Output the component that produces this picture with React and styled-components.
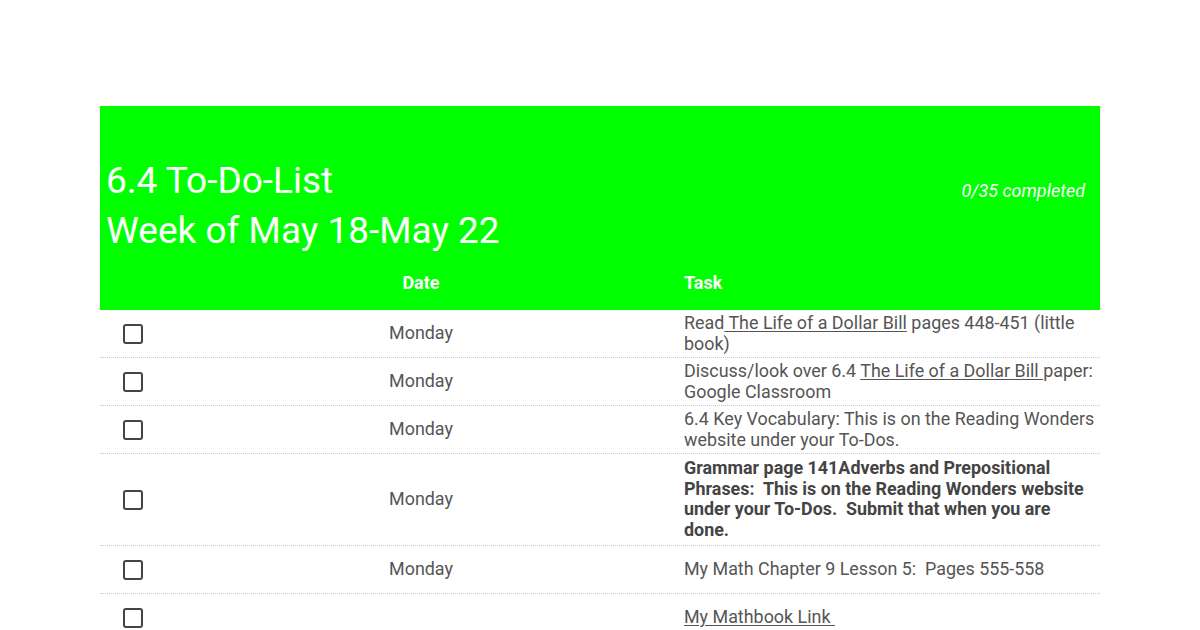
import styled, { createGlobalStyle } from "styled-components";

const GlobalStyle = createGlobalStyle`
  html, body {
    margin: 0;
    padding: 0;
    background: #fff;
  }
  body {
    font-family: Roboto, "Liberation Sans", Arial, sans-serif;
  }
`;

const Page = styled.div`
  width: 1000px;
  margin: 0 auto;
  padding-top: 106px;
`;

const Header = styled.div`
  background: #00ff00;
  color: #fff;
  padding-top: 50px;
`;

const TitleRow = styled.div`
  display: flex;
  justify-content: space-between;
  align-items: flex-start;
  padding: 0 15px 0 6px;
`;

const Title = styled.h1`
  margin: 0;
  font-size: 37px;
  font-weight: 400;
  line-height: 50px;
`;

const Progress = styled.div`
  font-size: 18px;
  font-style: italic;
  margin-top: 24px;
`;

const Grid = styled.div`
  display: grid;
  grid-template-columns: 64px 514px 1fr;
`;

const HeadCell = styled.div`
  font-weight: 700;
  font-size: 18px;
  padding: 16px 6px 17px;
  text-align: ${(p) => (p.$center ? "center" : "left")};
`;

const Row = styled(Grid)`
  min-height: 47px;
  border-bottom: 1px dotted #c8c8c8;
  color: #555;
  font-size: 17.9px;
  line-height: 20.5px;
`;

const BoxCell = styled.div`
  display: flex;
  align-items: center;
  justify-content: center;
  padding-left: 2px;
`;

const Box = styled.span`
  width: 16px;
  height: 16px;
  border: 2.5px solid #444;
  border-radius: 3px;
`;

const DateCell = styled.div`
  display: flex;
  align-items: center;
  justify-content: center;
`;

const TaskCell = styled.div`
  display: flex;
  align-items: center;
  white-space: pre-wrap;
  padding: ${(p) => (p.$bold ? "4px 6px 5px" : "3px 0 3px 6px")};
  font-weight: ${(p) => (p.$bold ? 700 : 400)};
  color: ${(p) => (p.$bold ? "#444" : "#555")};
`;

const Link = styled.span`
  text-decoration: underline;
  text-underline-offset: 2px;
`;

const rows = [
  {
    date: "Monday",
    task: (
      <span>
        Read<Link> The Life of a Dollar Bill</Link> pages 448-451 (little book)
      </span>
    ),
  },
  {
    date: "Monday",
    task: (
      <span>
        Discuss/look over 6.4 <Link>The Life of a Dollar Bill </Link>paper:
        Google Classroom
      </span>
    ),
  },
  {
    date: "Monday",
    task: "6.4 Key Vocabulary: This is on the Reading Wonders website under your To-Dos.",
  },
  {
    date: "Monday",
    bold: true,
    task: "Grammar page 141Adverbs and Prepositional Phrases:  This is on the Reading Wonders website under your To-Dos.  Submit that when you are done.",
  },
  {
    date: "Monday",
    task: "My Math Chapter 9 Lesson 5:  Pages 555-558",
  },
  {
    date: "",
    task: <Link>My Mathbook Link </Link>,
  },
];

export default function App() {
  return (
    <Page>
      <GlobalStyle />
      <Header>
        <TitleRow>
          <Title>
            6.4 To-Do-List
            <br />
            Week of May 18-May 22
          </Title>
          <Progress>0/35 completed</Progress>
        </TitleRow>
        <Grid>
          <div />
          <HeadCell $center>Date</HeadCell>
          <HeadCell>Task</HeadCell>
        </Grid>
      </Header>
      {rows.map((r, i) => (
        <Row key={i}>
          <BoxCell>
            <Box />
          </BoxCell>
          <DateCell>{r.date}</DateCell>
          <TaskCell $bold={r.bold}>
            <span>{r.task}</span>
          </TaskCell>
        </Row>
      ))}
    </Page>
  );
}
